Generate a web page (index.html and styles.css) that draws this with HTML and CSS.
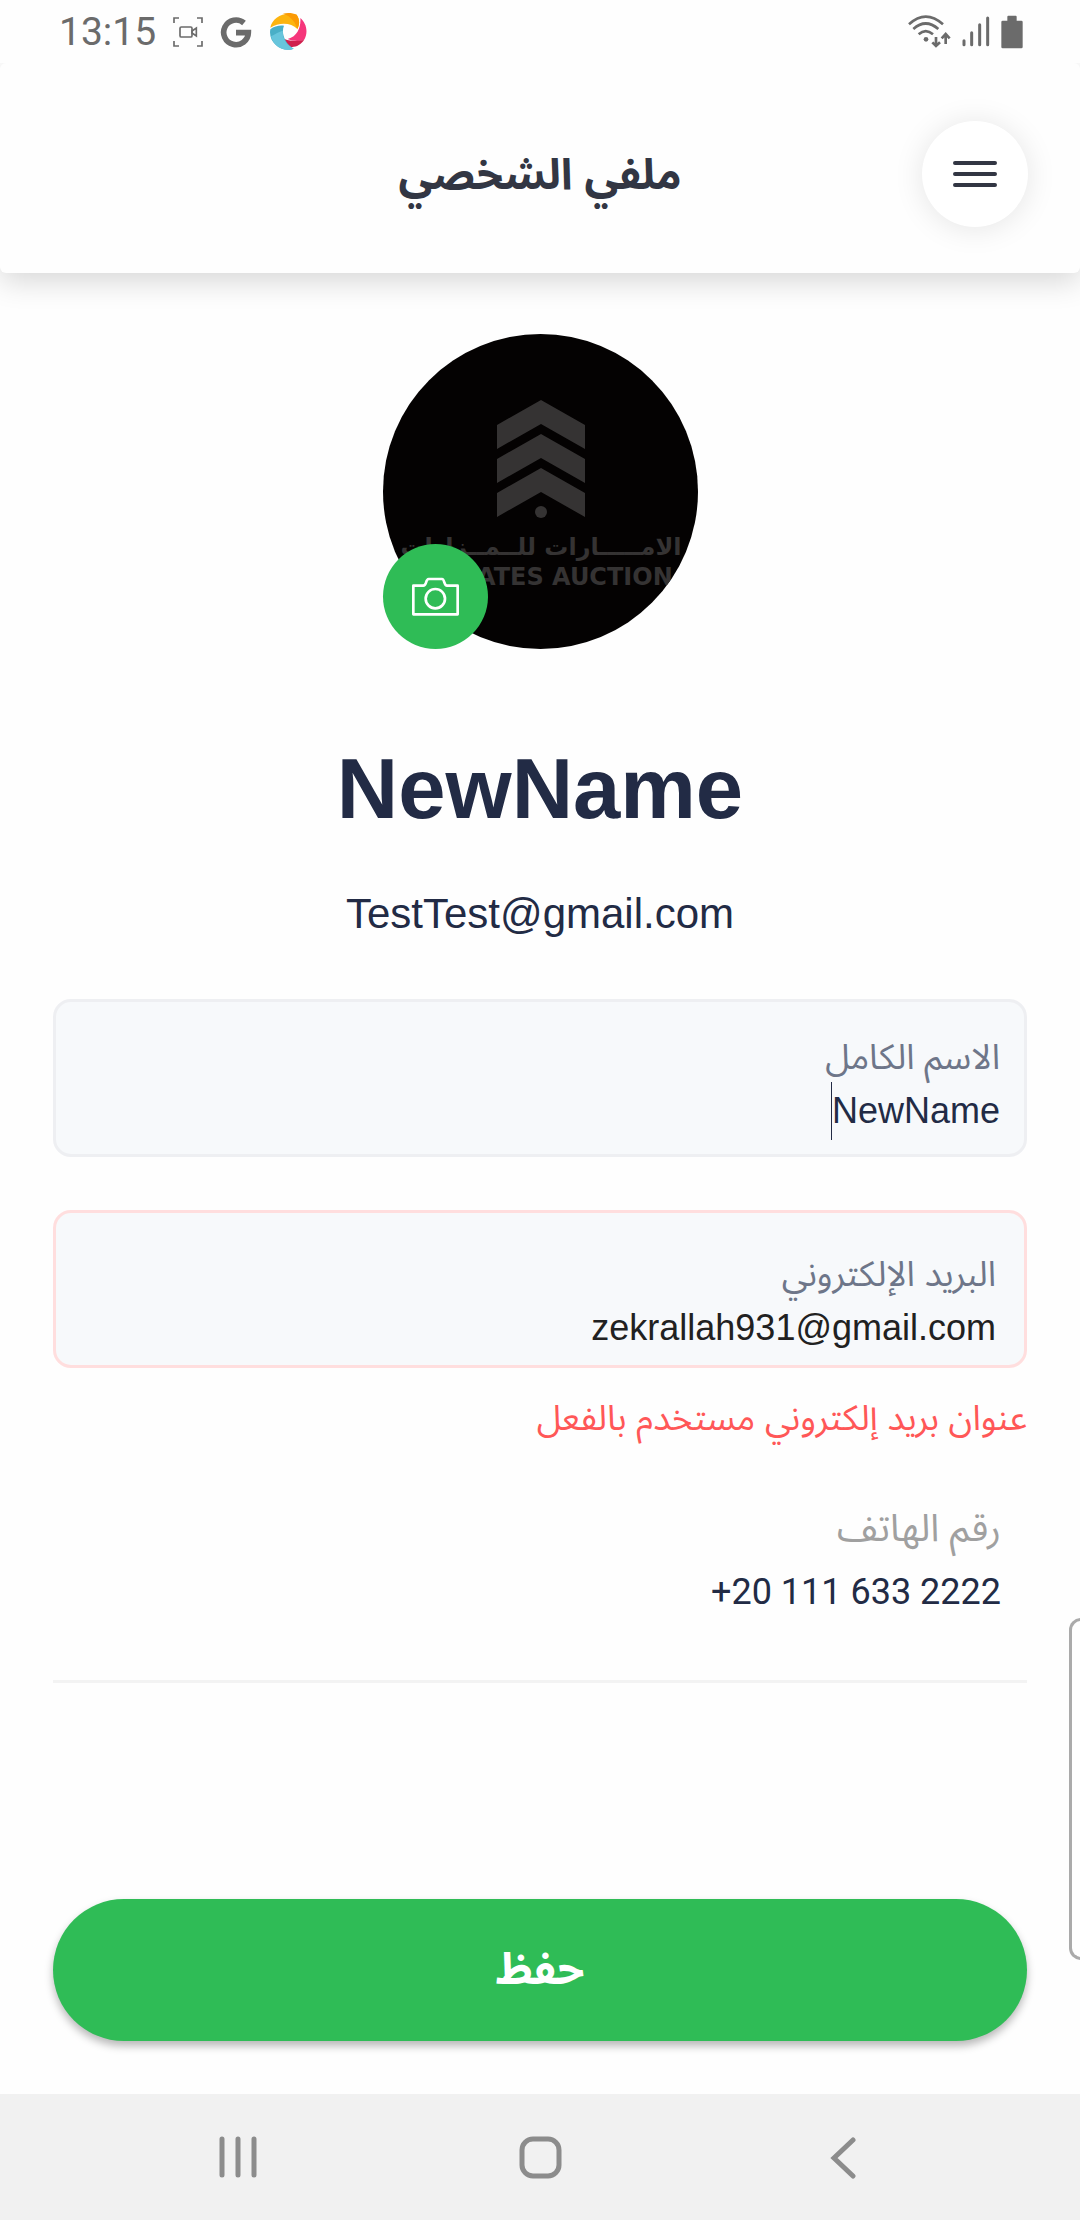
FILE: index.html
```html
<!DOCTYPE html>
<html lang="ar" dir="rtl">
<head>
<meta charset="utf-8">
<meta name="viewport" content="width=device-width, initial-scale=1">
<title>ملفي الشخصي</title>
<link rel="stylesheet" href="styles.css">
</head>
<body>
<div class="status" dir="ltr">
  <div class="status-group">
    <span class="clock">13:15</span>
    <svg width="30" height="30" viewBox="519 50 90 90" fill="none" stroke="#6b6b6b" stroke-width="5" aria-hidden="true"><path d="M522 68V53H537M591 53H606V68M606 122V137H591M537 137H522V122"/><rect x="540" y="80" width="36" height="30" rx="4"/><path d="M576 92l13-9v24l-13-9z"/></svg>
    <svg width="32" height="32" viewBox="666 46 96 96" fill="none" stroke="#6b6b6b" stroke-width="17" aria-hidden="true"><path d="M738 67A37 37 0 1 0 751 96H714"/></svg>
    <svg width="38" height="38" viewBox="806 38 114 114" aria-hidden="true"><path fill="#fdb40f" d="M810 82C815 52 850 32 889 43C899 58 898 72 891 86C872 66 836 66 810 82Z"/><path fill="#fb9a05" d="M848 40C861 37 878 38 889 43C899 58 898 72 891 86C887 69 873 47 848 40Z"/><path fill="#f5367b" d="M900 53C918 68 925 96 911 119C894 124 875 122 862 116C893 108 902 78 900 53Z"/><path fill="#cf1f4d" d="M911 119C902 134 883 143 868 139C861 135 855 125 852 116C874 124 896 122 911 119Z"/><path fill="#49afc7" d="M810 87C822 77 838 74 851 76C842 96 852 129 880 145C847 159 802 129 810 87Z"/><path fill="#67c5dc" d="M812 108C830 98 840 93 848 91C845 113 858 134 880 145C851 157 819 138 812 108Z"/></svg>
  </div>
  <div class="status-group status-end">
    <svg width="43" height="33" viewBox="139 41 129 99" fill="none" stroke="#6b6b6b" stroke-width="8" aria-hidden="true"><path d="M142 69Q192 23 244 69M155 83Q192 50 230 83M171 99Q192 80 214 99"/><circle cx="193" cy="114" r="7" fill="#6b6b6b" stroke="none"/><path d="M223 107V134M212 123L223 134L235 123M252 128V100M240 111L252 98L264 111"/></svg>
    <svg width="28" height="31" viewBox="299 48 84 93" stroke="#6b6b6b" stroke-width="9" stroke-linecap="round" aria-hidden="true"><path d="M305 122V134M328 98V134M352 74V134M376 54V134"/></svg>
    <svg width="22" height="34" viewBox="422 43 66 102" fill="#6b6b6b" aria-hidden="true"><path d="M441 60V48q0-3 3-3h22q3 0 3 3v12h14q4 0 4 4v75q0 4-4 4h-56q-4 0-4-4V64q0-4 4-4z"/></svg>
  </div>
</div>

<header class="header">
  <button class="menu" type="button" aria-label="القائمة">
    <svg width="46" height="28" viewBox="0 0 46 28" stroke="#323643" stroke-width="4" stroke-linecap="round" aria-hidden="true"><path d="M3 3H43M3 14H43M3 25H43"/></svg>
  </button>
  <h1 class="title">ملفي الشخصي</h1>
</header>

<main class="main">
  <div class="avatar">
    <svg class="photo" viewBox="0 0 315 315" direction="ltr" aria-hidden="true">
      <g fill="#353333">
        <path d="M158 66L202 91V115L158 90L114 115V91ZM158 100L202 125V149L158 124L114 149V125ZM158 134L202 159V183L158 158L114 183V159Z"/>
        <circle cx="158" cy="178" r="6"/>
        <text class="mark-ar" x="158" y="221" text-anchor="middle">الامـــــارات للــمــزادات</text>
        <text class="mark-en" x="158" y="251" text-anchor="middle">EMIRATES AUCTION</text>
      </g>
    </svg>
    <button class="camera" type="button" aria-label="تغيير الصورة">
      <svg width="105" height="105" viewBox="69 672 315 315" fill="none" stroke="#fff" stroke-width="8" stroke-linejoin="round" aria-hidden="true"><path d="M160 797H190Q195 797 198 788Q201 777 206 777H246Q250 777 253 787Q256 797 261 797H293V883H160Z"/><circle cx="226" cy="836" r="29"/></svg>
    </button>
  </div>
  <h2 class="name">NewName</h2>
  <p class="email">TestTest@gmail.com</p>

  <form class="form">
    <div class="field">
      <label for="full-name">الاسم الكامل</label>
      <div class="entry"><input id="full-name" type="text" value="NewName"><span class="caret"></span></div>
    </div>
    <div class="field invalid">
      <label for="mail">البريد الإلكتروني</label>
      <div class="entry"><input id="mail" type="email" value="zekrallah931@gmail.com" aria-describedby="mail-error"></div>
    </div>
    <p class="error" id="mail-error">عنوان بريد إلكتروني مستخدم بالفعل</p>
    <div class="phone">
      <span class="phone-label">رقم الهاتف</span>
      <bdi class="phone-value" dir="ltr">+20 111 633 2222</bdi>
    </div>
    <button class="save" type="submit">حفظ</button>
  </form>
</main>

<nav class="nav" dir="ltr">
  <button type="button" aria-label="التطبيقات الأخيرة"><svg width="44" height="44" viewBox="0 0 44 44" stroke="#8c8c8c" stroke-width="5" stroke-linecap="round" aria-hidden="true"><path d="M6 4V40M22 4V40M38 4V40"/></svg></button>
  <button type="button" aria-label="الرئيسية"><svg width="44" height="44" viewBox="0 0 44 44" fill="none" stroke="#8c8c8c" stroke-width="5" aria-hidden="true"><rect x="4" y="4" width="37" height="37" rx="11"/></svg></button>
  <button type="button" aria-label="رجوع"><svg width="44" height="44" viewBox="0 0 44 44" fill="none" stroke="#8c8c8c" stroke-width="5" stroke-linecap="round" aria-hidden="true"><path d="M33 5L14 23L33 41"/></svg></button>
</nav>
<div class="edge-handle"></div>
</body>
</html>
```
FILE: styles.css
```css
* {
  box-sizing: border-box;
}

body {
  margin: 0;
  min-height: 100vh;
  display: flex;
  flex-direction: column;
  position: relative;
  overflow-x: hidden;
  background: #fefefe;
  color: #222b45;
  font-family: "Liberation Sans", "Noto Sans Arabic", "DejaVu Sans", sans-serif;
}

h1, h2, p {
  margin: 0;
}

button {
  padding: 0;
  border: 0;
  font-family: inherit;
}

svg {
  display: block;
  flex: none;
}

.status {
  position: relative;
  z-index: 2;
  display: flex;
  justify-content: space-between;
  align-items: center;
  height: 63px;
  padding: 0 57px 0 59px;
  background: #fefefe;
}

.status-group {
  display: flex;
  align-items: center;
  gap: 17px;
}

.status-end {
  gap: 11px;
}

.clock {
  color: #6b6b6b;
  font: 39px/66px Roboto, sans-serif;
}

.header {
  position: relative;
  z-index: 1;
  display: grid;
  grid-template-columns: 106px 1fr 106px;
  align-items: center;
  min-height: 210px;
  padding: 12px 52px 0;
  border-radius: 6px;
  background: #fefefe;
  box-shadow: 0 8px 30px rgba(0, 0, 0, 0.16);
}

.menu {
  display: grid;
  place-items: center;
  height: 106px;
  border-radius: 50%;
  background: #fff;
  box-shadow: 0 2px 30px rgba(0, 0, 0, 0.1);
}

.title {
  color: #323643;
  font-size: 43px;
  line-height: 64px;
  text-align: center;
}

.main {
  flex: 1;
  display: flex;
  flex-direction: column;
  align-items: center;
  padding: 61px 53px 53px;
}

.avatar {
  position: relative;
  width: 315px;
}

.photo {
  width: 100%;
  border-radius: 50%;
  background: #040202;
}

.mark-ar {
  font: bold 24px "DejaVu Sans", sans-serif;
}

.mark-en {
  font: bold 24px "DejaVu Sans", sans-serif;
}

.camera {
  position: absolute;
  left: 0;
  bottom: 0;
  border-radius: 50%;
  background: #2fbc56;
}

.name {
  margin-top: 88px;
  font-size: 85px;
  line-height: 104px;
}

.email {
  margin-top: 48px;
  font-size: 42px;
  line-height: 50px;
}

.form {
  flex: 1;
  align-self: stretch;
  display: flex;
  flex-direction: column;
  margin-top: 60px;
}

.field {
  display: flex;
  flex-direction: column;
  margin-bottom: 53px;
  padding: 30px 24px 14px;
  border: 3px solid #eeeff2;
  border-radius: 18px;
  background: #f7f9fb;
}

.field label {
  color: #6e7689;
  font-size: 35px;
  line-height: 50px;
}

.field.invalid {
  margin-bottom: 22px;
  padding: 36px 28px 8px;
  border-color: #ffdede;
}

.entry {
  display: flex;
  align-items: center;
}

.entry input {
  flex: 0 1 auto;
  field-sizing: content;
  min-width: 0;
  height: 58px;
  padding: 0;
  border: 0;
  outline: 0;
  background: none;
  color: #222b45;
  font: 36px "Liberation Sans", sans-serif;
}

.invalid input {
  color: #212121;
}

.caret {
  width: 1px;
  height: 58px;
  background: #222b45;
}

.error {
  color: #ff5757;
  font-size: 35px;
  line-height: 56px;
}

.phone {
  display: flex;
  flex-direction: column;
  align-items: flex-start;
  margin-top: 50px;
  padding: 0 26px 56px;
  border-bottom: 3px solid #f3f3f3;
}

.phone-label {
  color: #a0a0a0;
  font-size: 38px;
  line-height: 64px;
}

.phone-value {
  font-family: Roboto, sans-serif;
  font-size: 36px;
  line-height: 64px;
}

.save {
  height: 142px;
  margin-top: auto;
  border-radius: 71px;
  background: #2fbc56;
  box-shadow: 0 5px 8px rgba(0, 0, 0, 0.28);
  color: #fff;
  font-size: 44px;
  font-weight: bold;
}

.nav {
  display: flex;
  justify-content: space-between;
  align-items: center;
  height: 126px;
  padding: 0 20%;
  background: #f1f1f1;
}

.nav button {
  background: none;
}

.edge-handle {
  position: absolute;
  top: 1618px;
  right: -3px;
  width: 14px;
  height: 342px;
  border: 3px solid #aaa;
  border-radius: 12px 0 0 12px;
}
```
